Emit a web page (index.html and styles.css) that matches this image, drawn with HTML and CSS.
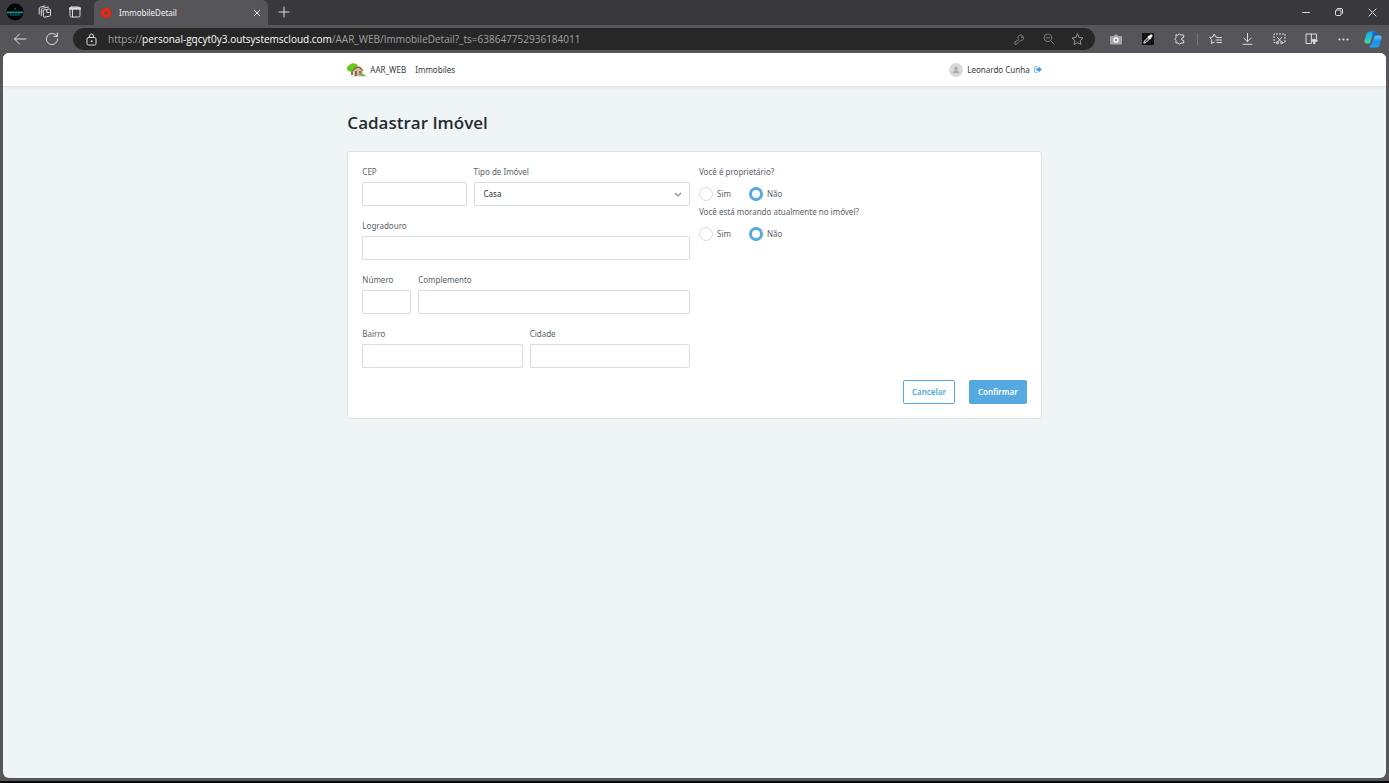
FILE: index.html
```html
<!DOCTYPE html>
<html lang="pt-BR">
<head>
<meta charset="utf-8">
<meta name="viewport" content="width=device-width, initial-scale=1">
<title>ImmobileDetail</title>
<link rel="stylesheet" href="styles.css">
</head>
<body>
<div class="browser">
  <div class="titlebar">
    <button class="tool tool-title" aria-label="Perfil">
      <svg width="18" height="18" viewBox="0 0 18 18"><circle cx="9" cy="9" r="8.500" fill="#050505"/><path d="M1 9.500h16" stroke="#0b9c98" stroke-width="2" stroke-dasharray="2.400 .3"/><path d="M8.500 7l1.500-2.500M4 12h10" stroke="#0a7774" stroke-width="1"/></svg>
    </button>
    <button class="tool tool-title" aria-label="Espaços de trabalho">
      <svg class="line" width="14" height="14" viewBox="0 0 14 14"><path d="M5.500 5l6-1q1 0 1 1v5q0 1-1 1.200l-5 1q-1 0-1-1zM3.300 10.500V4.800q0-1.300 1.200-1.600L10.500 2M1.200 9V4q0-1.500 1.300-1.900L7 .8M8.800 4.800v2.700H11"/></svg>
    </button>
    <button class="tool tool-title" aria-label="Guias verticais">
      <svg class="line" width="12" height="12" viewBox="0 0 12 12"><rect x="1" y="1" width="10" height="10" rx="1.500"/><path d="M1 2.500h10" stroke-width="2.400"/><path d="M3.500 3v8"/></svg>
    </button>
    <div class="tab">
      <svg width="12" height="12" viewBox="0 0 12 12"><circle cx="6" cy="6" r="3.600" fill="none" stroke="#fa2109" stroke-width="3"/></svg>
      <span class="tab-title">ImmobileDetail</span>
      <button class="tab-close" aria-label="Fechar guia"><svg class="line" width="8" height="8" viewBox="0 0 8 8"><path d="M1.200 1.200l5.600 5.600M6.800 1.200L1.200 6.800"/></svg></button>
    </div>
    <button class="tool" aria-label="Nova guia"><svg class="line" width="12" height="12" viewBox="0 0 12 12"><path d="M6 1v10M1 6h10"/></svg></button>
    <div class="window-buttons">
      <button class="tool" aria-label="Minimizar"><svg class="line" width="8" height="8" viewBox="0 0 8 8"><path d="M.5 4.500h7"/></svg></button>
      <button class="tool" aria-label="Restaurar"><svg class="line" width="10" height="10" viewBox="0 0 10 10"><rect x="1.500" y="3" width="5.500" height="5.500" rx="1"/><path d="M3.500 1.500H7Q8.500 1.500 8.500 3v3.500"/></svg></button>
      <button class="tool" aria-label="Fechar"><svg class="line" width="9" height="9" viewBox="0 0 9 9"><path d="M1 1l7 7M8 1L1 8"/></svg></button>
    </div>
  </div>

  <div class="toolbar">
    <button class="tool" aria-label="Voltar"><svg class="line" width="14" height="12" viewBox="0 0 14 12"><path d="M13 6H1.500M6.500 1l-5 5 5 5"/></svg></button>
    <button class="tool" aria-label="Atualizar"><svg class="line" width="14" height="14" viewBox="0 0 14 14"><path d="M12.600 7A5.600 5.600 0 1 1 10.800 2.900L12.200 4.200M12.400 1v3.400H9"/></svg></button>
    <div class="address">
      <button class="tool tool-lock" aria-label="Informações do site"><svg class="line" width="11" height="13" viewBox="0 0 11 13"><rect x="1" y="4.500" width="9" height="7.500" rx="1.500"/><path d="M3.500 4.500V3a2 2 0 0 1 4 0v1.500"/><circle cx="5.500" cy="8.200" r=".5"/></svg></button>
      <div class="url">https://<span class="url-host">personal-gqcyt0y3.outsystemscloud.com</span>/AAR_WEB/ImmobileDetail?_ts=638647752936184011</div>
      <button class="tool tool-dim" aria-label="Senhas"><svg class="line" width="11" height="11" viewBox="0 0 11 11"><path d="M4.300 5.400A2.900 2.900 0 1 1 6.400 6.700L5.200 7.300 4.500 8.300 2.600 10.200H.8V8.400z"/><circle cx="7.800" cy="3.200" r=".4"/></svg></button>
      <button class="tool tool-dim" aria-label="Reduzir"><svg class="line" width="12" height="12" viewBox="0 0 12 12"><circle cx="4.800" cy="4.800" r="3.800"/><path d="M7.600 7.600L11.200 11.200M3 4.800h3.600"/></svg></button>
      <button class="tool tool-dim tool-star" aria-label="Adicionar aos favoritos"><svg class="line" width="13" height="13" viewBox="0 0 13 13"><path d="M6.500 1l1.700 3.500 3.800.5-2.800 2.700.7 3.800-3.400-1.800-3.400 1.800.7-3.800L1 5l3.800-.5z"/></svg></button>
    </div>
    <button class="tool" aria-label="Captura"><svg width="12" height="11" viewBox="0 0 12 11"><path d="M4 2l.8-1.500h2.400L8 2h3a1 1 0 0 1 1 1v6.500a1 1 0 0 1-1 1H1a1 1 0 0 1-1-1V3a1 1 0 0 1 1-1z" fill="#a7a7a9"/><circle cx="6" cy="6" r="2" fill="#888" stroke="#fff" stroke-width="1.300"/></svg></button>
    <button class="tool" aria-label="Conta-gotas"><svg width="12" height="12" viewBox="0 0 12 12"><rect width="12" height="12" rx="1" fill="#111"/><path d="M1.800 10.200L2.500 8 6 4.500 7.500 6 4 9.500z" fill="#555" stroke="#fff" stroke-width=".9"/><path d="M6 3.200l2.800 2.800" stroke="#fff" stroke-width="1.600"/><path d="M7.500 4.500l1.700-1.700" stroke="#fff" stroke-width="2.800" stroke-linecap="round"/></svg></button>
    <button class="tool" aria-label="Extensões"><svg class="line" width="12" height="12" viewBox="0 0 12 12"><path d="M4 2Q5.500-.3 7 2h2.700v2.400Q7.500 4.600 7.500 6t2.200 1.600V10H7Q5.500 12.300 4 10H2V7.500Q-.3 6 2 4.500V2z"/></svg></button>
    <span class="separator"></span>
    <button class="tool" aria-label="Favoritos"><svg class="line" width="13" height="12" viewBox="0 0 13 12"><path d="M7.500 4L6.800 3.900 5.200 1 3.600 4l-3 .5 2.200 2.300-.5 3.700 3-1.300M8 4.500h4.500M7 7h5.500M8 9.500h4.500"/></svg></button>
    <button class="tool" aria-label="Downloads"><svg class="line" width="11" height="12" viewBox="0 0 11 12"><path d="M5.500.5v8M2 5.200l3.500 3.500L9 5.200M1 11.300h9"/></svg></button>
    <button class="tool" aria-label="Captura da Web"><svg class="line" width="13" height="12" viewBox="0 0 13 12"><path d="M2.500 9.500H1v-8.500h11v8.500h-1.500" stroke-dasharray="2 1" stroke-linecap="butt"/><path d="M4.500 4.500l3.700 4.300M8.500 4.500L4.800 8.800"/><circle cx="4.300" cy="9.800" r="1"/><circle cx="8.700" cy="9.800" r="1"/></svg></button>
    <button class="tool" aria-label="Tela dividida"><svg class="line" width="13" height="12" viewBox="0 0 13 12"><path d="M6 1H1v9.500h5zM6 1h5.500v4.500"/><path d="M7 7.500h4.500M9.200 7v3" stroke-width="2.400"/></svg></button>
    <button class="tool" aria-label="Configurações e mais"><svg width="11" height="3" viewBox="0 0 11 3" fill="#e8e8ea"><circle cx="1.500" cy="1.500" r="1"/><circle cx="5.500" cy="1.500" r="1"/><circle cx="9.500" cy="1.500" r="1"/></svg></button>
    <button class="tool tool-copilot" aria-label="Copilot">
      <svg width="18" height="17" viewBox="0 0 18 17"><defs><linearGradient id="c1" x1="0" y1="0" x2="0" y2="1"><stop offset="0" stop-color="#12a8e8"/><stop offset=".5" stop-color="#20bcd2"/><stop offset="1" stop-color="#56dc92"/></linearGradient><linearGradient id="c2" x1="0" y1="0" x2="0" y2="1"><stop offset="0" stop-color="#5ac8fa"/><stop offset=".5" stop-color="#218bee"/><stop offset="1" stop-color="#1aa5f0"/></linearGradient></defs><path d="M5 .5h6q1.800 0 1.300 2L9 3 6.500 11Q6 12.500 4 12.500H2.500Q0 12.500.5 9.500L2.500 3Q3.300.5 5 .5z" fill="url(#c1)"/><path d="M9 .5h2q1.500 0 2 2.500l.5 1.500H10L8 3z" fill="#1565d8"/><path d="M13 16.500H7q-1.800 0-1.300-2L7.500 13l3-7.500Q11 4.500 13 4.500h2.500Q18 4.500 17.500 7.500L15.500 14q-.8 2.500-2.500 2.500z" fill="url(#c2)"/></svg>
    </button>
  </div>

  <div class="page">
    <header class="header">
      <div class="container header-content">
        <nav class="menu">
          <svg class="logo" width="19" height="14" viewBox="0 0 19 14"><path d="M4 6h2v6H4z" fill="#8b7454"/><path d="M0 5Q.2 2.500 2.500 2 4 0 6.500.3 10 .5 10.800 3L10 7 5.500 8.500H2Q-.2 7.500 0 5z" fill="#65ca21"/><path d="M6.500 6.800L10 4l5.500 3v6h-9z" fill="#dfbd8e"/><path d="M5 7.500L8.500 4 13 3.500l3.500 4-1 .5-3.500-3-3.500.8-2.500 2.700z" fill="#9e5639"/><path d="M8 8h2v5H8zM12 8h2.500v2.500H12z" fill="#58747e"/><path d="M11.500 11h3v1h-3z" fill="#a77744"/><path d="M14 13v-1.500q1.500-2 2.500 0 2-.3 2.200 1.500z" fill="#55ba1c"/><path d="M3 13.300h15" stroke="#c8cbc2" stroke-width=".7"/></svg>
          <a class="link" href="#">AAR_WEB</a>
          <a class="link" href="#">Immobiles</a>
        </nav>
        <div class="user">
          <svg width="14" height="14" viewBox="0 0 14 14"><circle cx="7" cy="7" r="7" fill="#dadada"/><circle cx="7" cy="5.300" r="1.700" fill="#aaa"/><path d="M3.700 10.200Q4 7.700 7 7.300q3 .4 3.300 2.900z" fill="#aaa"/></svg>
          <span>Leonardo Cunha</span>
          <a class="logout" href="#" aria-label="Sair"><svg width="8" height="7" viewBox="0 0 8 7"><path d="M3 .6H1.500Q.6.600.6 1.500v4q0 .9.900.9H3" fill="none" stroke="#64b2e5"/><path d="M2.300 2.200h2.200V.3L7.800 3.500 4.500 6.700V4.800H2.300z" fill="#3b9ee0"/></svg></a>
        </div>
      </div>
    </header>

    <main class="container">
      <h1 class="heading">Cadastrar Imóvel</h1>
      <form class="card">
        <div class="columns">
          <div class="fields">
            <div class="row row-cep">
              <div class="field"><label for="cep">CEP</label><input class="control" id="cep" type="text"></div>
              <div class="field"><label for="tipo">Tipo de Imóvel</label>
                <div class="select-wrap"><select class="control select" id="tipo"><option>Casa</option></select><svg class="chevron" width="8" height="6" viewBox="0 0 8 6"><path d="M1 1l3 3 3-3" fill="none" stroke="#868b90" stroke-width="1.200"/></svg></div>
              </div>
            </div>
            <div class="row">
              <div class="field"><label for="logradouro">Logradouro</label><input class="control" id="logradouro" type="text"></div>
            </div>
            <div class="row row-numero">
              <div class="field"><label for="numero">Número</label><input class="control" id="numero" type="text"></div>
              <div class="field"><label for="complemento">Complemento</label><input class="control" id="complemento" type="text"></div>
            </div>
            <div class="row row-bairro">
              <div class="field"><label for="bairro">Bairro</label><input class="control" id="bairro" type="text"></div>
              <div class="field"><label for="cidade">Cidade</label><input class="control" id="cidade" type="text"></div>
            </div>
          </div>
          <div class="questions">
            <div role="radiogroup" aria-labelledby="q1">
              <div id="q1">Você é proprietário?</div>
              <div class="options">
                <label class="option"><input class="radio" type="radio" name="proprietario">Sim</label>
                <label class="option"><input class="radio" type="radio" name="proprietario" checked>Não</label>
              </div>
            </div>
            <div role="radiogroup" aria-labelledby="q2">
              <div id="q2">Você está morando atualmente no imóvel?</div>
              <div class="options">
                <label class="option"><input class="radio" type="radio" name="morando">Sim</label>
                <label class="option"><input class="radio" type="radio" name="morando" checked>Não</label>
              </div>
            </div>
          </div>
        </div>
        <div class="actions">
          <button class="btn" type="button">Cancelar</button>
          <button class="btn btn-primary" type="button">Confirmar</button>
        </div>
      </form>
    </main>
  </div>
</div>
</body>
</html>
```
FILE: styles.css
```css
* { box-sizing: border-box; }
body {
  margin: 0;
  background: #56555a;
  color: #5a6269;
  font: 8px/12px "Noto Sans", "Open Sans", sans-serif;
}
button, input, select { font: inherit; color: inherit; margin: 0; }
button { padding: 0; border: 0; background: none; }
a { color: inherit; text-decoration: none; }

.browser {
  display: flex;
  flex-direction: column;
  min-height: 100vh;
  border-bottom: 2px solid #08080a;
}
.line {
  fill: none;
  stroke: currentColor;
  stroke-width: 1;
  stroke-linecap: round;
  stroke-linejoin: round;
}
.tool {
  flex: none;
  display: flex;
  align-items: center;
  justify-content: center;
  width: 32px;
  height: 24px;
  color: #dcdcde;
}
.titlebar {
  display: flex;
  height: 25px;
  padding-right: 1px;
  background: #39383d;
}
.tool-title { width: 30px; }
.tab {
  display: flex;
  align-items: center;
  gap: 7px;
  width: 174px;
  margin-left: 4px;
  padding: 0 5px 0 6px;
  background: #56555a;
  border-radius: 6px 6px 0 0;
  color: #f4f4f5;
}
.tab-title { flex: 1; }
.tab-close { display: flex; padding: 2px; color: #e6e6e8; }
.window-buttons { display: flex; gap: 1px; margin-left: auto; }

.toolbar {
  display: flex;
  align-items: center;
  height: 28px;
  padding: 0 2px 0 4px;
}
.address {
  flex: 1;
  display: flex;
  align-items: center;
  height: 22px;
  margin: 0 5px;
  padding: 0 3px;
  border-radius: 11px;
  background: #272727;
}
.tool-lock { width: 30px; }
.tool-dim { width: 29px; color: #7d7d7f; }
.tool-star { color: #949496; }
.url {
  flex: 1;
  min-width: 0;
  margin-left: 2px;
  overflow: hidden;
  white-space: nowrap;
  color: #a0a0a1;
  font: 10px/14px "Open Sans", "Noto Sans", sans-serif;
}
.url-host { color: #fff; }
.separator { width: 1px; height: 12px; margin: 0 1px; background: #77767b; }
.tool-copilot { width: 28px; }

.page {
  flex: 1;
  margin: 0 3px 3px;
  overflow: hidden;
  border-radius: 6px;
  background: #eff4f5;
}
.container { width: 50.2%; margin: 0 auto; }
.header {
  background: #fff;
  border-bottom: 1px solid #e2e5e8;
  box-shadow: 0 1px 2px #e6eaec;
}
.header-content {
  display: flex;
  align-items: center;
  justify-content: space-between;
  height: 33px;
  color: #343a40;
}
.menu { display: flex; align-items: center; }
.logo { margin-right: 4px; }
.link { margin-right: 9px; }
.user { display: flex; align-items: center; gap: 4px; }
.logout { display: flex; }
.heading {
  margin: 22px 0 15px;
  color: #272b30;
  font: 600 17px/27px "Open Sans", "Noto Sans", sans-serif;
}
.card {
  padding: 14px;
  border: 1px solid #dee2e6;
  border-radius: 3px;
  background: #fff;
}
.columns {
  display: grid;
  grid-template-columns: 1fr 1fr;
  gap: 9px;
}
.fields { display: grid; gap: 14px; }
.row { display: grid; gap: 7px; }
.row-cep { grid-template-columns: 104fr 216fr; }
.row-numero { grid-template-columns: 49fr 273fr; }
.row-bairro { grid-template-columns: 1fr 1fr; }
.field { display: grid; gap: 4px; min-width: 0; }
.control {
  display: block;
  width: 100%;
  height: 24px;
  padding: 0 9px;
  border: 1px solid #d9dce0;
  border-radius: 2px;
  background: #fff;
  color: #272b30;
}
.select-wrap { position: relative; }
.select { appearance: none; }
.chevron { position: absolute; top: 10px; right: 8px; pointer-events: none; }
.options {
  display: flex;
  gap: 18px;
  height: 24px;
  margin-top: 4px;
}
.option { display: flex; align-items: center; gap: 4px; }
.radio {
  appearance: none;
  width: 14px;
  height: 14px;
  border: 1px solid #d9dce0;
  border-radius: 50%;
  background: #fff;
}
.radio:checked { border: 3px solid #55a9e1; }
.actions {
  display: flex;
  justify-content: flex-end;
  gap: 14px;
  margin-top: 12px;
}
.btn {
  height: 24px;
  padding: 0 8px;
  border: 1px solid #55a9e1;
  border-radius: 2px;
  background: #fff;
  color: #55a9e1;
  font-weight: 600;
}
.btn-primary { background: #55a9e1; color: #fff; }
```
